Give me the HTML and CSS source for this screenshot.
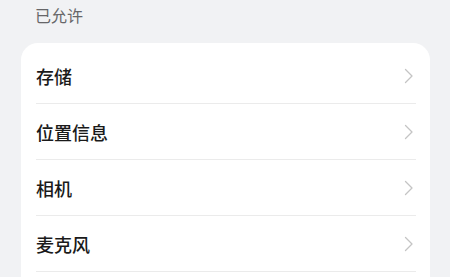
FILE: index.html
```html
<!DOCTYPE html>
<html lang="zh">
<head>
<meta charset="utf-8">
<link rel="stylesheet" href="styles.css">
</head>
<body>
<div class="section-title">已允许</div>
<div class="card">
  <div class="row"><span class="label">存储</span><svg class="chev" viewBox="0 0 10 16"><path d="M1.5 1.5 L8 8 L1.5 14.5"/></svg></div>
  <div class="row"><span class="label">位置信息</span><svg class="chev" viewBox="0 0 10 16"><path d="M1.5 1.5 L8 8 L1.5 14.5"/></svg></div>
  <div class="row"><span class="label">相机</span><svg class="chev" viewBox="0 0 10 16"><path d="M1.5 1.5 L8 8 L1.5 14.5"/></svg></div>
  <div class="row"><span class="label">麦克风</span><svg class="chev" viewBox="0 0 10 16"><path d="M1.5 1.5 L8 8 L1.5 14.5"/></svg></div>
</div>
</body>
</html>
```
FILE: styles.css
```css
html, body {
  margin: 0;
  padding: 0;
  height: 100%;
  background: #f1f2f4;
  font-family: "Noto Sans CJK SC", "Noto Sans", sans-serif;
  overflow: hidden;
}
.section-title {
  box-sizing: border-box;
  height: 43px;
  padding: 5px 0 0 35px;
  font-size: 16px;
  line-height: 21px;
  color: #666668;
}
.card {
  margin-left: 21px;
  width: 409px;
  height: 234px;
  background: #ffffff;
  border-radius: 17px 17px 0 0;
  padding: 5px 14px 0 15px;
  box-sizing: border-box;
}
.row {
  box-sizing: border-box;
  height: 56px;
  display: flex;
  align-items: center;
  justify-content: space-between;
  border-bottom: 1px solid #ebebeb;
}
.label {
  font-size: 18px;
  font-weight: 500;
  color: #1a1a1a;
}
.chev {
  width: 10px;
  height: 16px;
  margin-right: 2px;
  fill: none;
  stroke: #c4c4c4;
  stroke-width: 1.3;
  stroke-linecap: round;
  stroke-linejoin: round;
}
```
